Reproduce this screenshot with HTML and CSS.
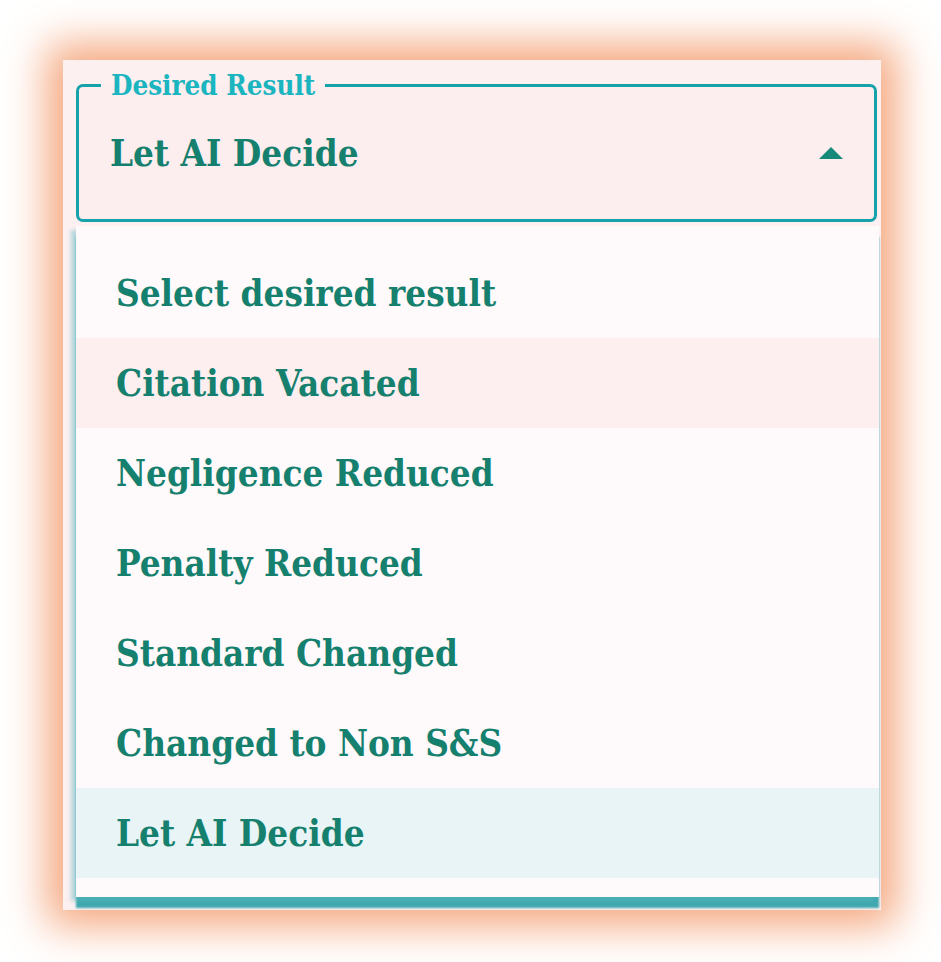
FILE: index.html
```html
<!DOCTYPE html>
<html lang="en">
<head>
    <meta charset="UTF-8">
    <title>Desired Result</title>
    <link rel="stylesheet" href="styles.css">
</head>
<body>
    <!-- glowing card -->
    <div class="card">
        <!-- outlined select -->
        <fieldset class="field">
            <legend class="field-label">Desired Result</legend>
            <div class="field-value">
                <span>Let AI Decide</span>
                <svg class="arrow" width="26" height="14" viewBox="0 0 26 14">
                    <path d="M1 13 L13 1 L25 13 Z" fill="#168a78"/>
                </svg>
            </div>
        </fieldset>

        <!-- open menu -->
        <ul class="menu">
            <li class="menu-item">Select desired result</li>
            <li class="menu-item hover">Citation Vacated</li>
            <li class="menu-item">Negligence Reduced</li>
            <li class="menu-item">Penalty Reduced</li>
            <li class="menu-item">Standard Changed</li>
            <li class="menu-item">Changed to Non S&amp;S</li>
            <li class="menu-item selected">Let AI Decide</li>
        </ul>
    </div>
</body>
</html>
```

FILE: styles.css
```css
:root {
    --teal: #16a2ab;
    --label: #1ab5bf;
    --text: #16806e;
    --glow: #f5a77e;
}

* {
    box-sizing: border-box;
    margin: 0;
    padding: 0;
}

body {
    background: #ffffff;
    font-family: 'DejaVu Serif', 'Liberation Serif', serif;
    height: 962px;
    overflow: hidden;
    padding: 60px 60px 0 63px;
}

.card {
    width: 818px;
    height: 850px;
    background: #fdf0f1;
    box-shadow: 0 0 40px 16px var(--glow);
    padding: 12px 4px 0 13px;
}

.field {
    border: 3px solid var(--teal);
    border-radius: 7px;
    height: 150px;
    padding: 0 30px 0 31px;
    background: #fcedef;
}

.field-label {
    color: var(--label);
    font-size: 27.5px;
    font-weight: bold;
    font-stretch: condensed;
    padding: 0 10px;
    margin-left: -9px;
    line-height: 1;
}

.field-value {
    display: flex;
    justify-content: space-between;
    align-items: center;
    height: 108px;
    color: var(--text);
    font-size: 36.5px;
    font-weight: bold;
    font-stretch: condensed;
}

.arrow {
    margin-top: -2px;
}

.menu {
    list-style: none;
    background: #fefafb;
    margin-top: 4px;
    width: 803px;
    padding: 22px 0 19px;
    box-shadow: -5px 4px 4px rgba(90, 185, 192, 0.45), 0 11px 2px rgba(30, 155, 163, 0.85);
}

.menu-item {
    height: 90px;
    display: flex;
    align-items: center;
    padding-left: 40px;
    color: var(--text);
    font-size: 36.5px;
    font-weight: bold;
    font-stretch: condensed;
}

.menu-item.hover {
    background: #fdeff0;
}

.menu-item.selected {
    background: #e8f4f6;
}
```
